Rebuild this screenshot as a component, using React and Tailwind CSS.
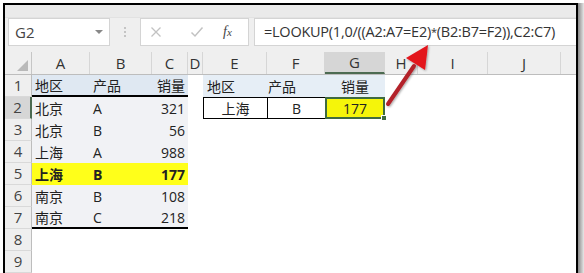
import React from "react";

const W = [27, 58, 62, 36, 15, 64, 58, 60, 33, 70, 73];
const LETTERS = ["A", "B", "C", "D", "E", "F", "G", "H", "I", "J"];

const cjk = "font-['Microsoft_YaHei','Noto_Sans_CJK_SC',sans-serif] text-[14px]";
const lat = "font-['Open_Sans','Noto_Sans_CJK_SC',sans-serif] text-[14px]";

function HeaderRow() {
  return (
    <div className="flex h-[23px] bg-[#efefef] border-b border-[#bdbdbd]">
      <div className="relative h-full border-r border-[#c6c6c6]" style={{ width: W[0] }}>
        <div className="absolute right-[3px] bottom-[3px] w-0 h-0 border-l-[11px] border-l-transparent border-b-[11px] border-b-[#b9b9b9]" />
      </div>
      {LETTERS.map((l, i) => (
        <div
          key={l}
          className={
            "h-full flex items-center justify-center border-r border-[#d6d6d6] text-[15px] text-[#333] font-['Open_Sans',sans-serif] " +
            (l === "G" ? "bg-[#d6d6d6] border-b-2 border-b-[#4c6b52]" : "")
          }
          style={{ width: W[i + 1] }}
        >
          {l}
        </div>
      ))}
      <div className="flex-1 h-full" />
    </div>
  );
}

function Cell({ i, children, className = "" }) {
  return (
    <div className={"h-full flex items-center shrink-0 " + className} style={{ width: W[i] }}>
      {children}
    </div>
  );
}

function RowNum({ n, active }) {
  return (
    <div
      className={
        "h-full flex items-center justify-center shrink-0 border-b border-[#d9d9d9] text-[15px] text-[#444] font-['Open_Sans',sans-serif] " +
        (active ? "bg-[#d6d6d6] border-r-2 border-r-[#4c6b52]" : "bg-[#efefef] border-r border-r-[#bdbdbd]")
      }
      style={{ width: W[0] }}
    >
      {n}
    </div>
  );
}

const data = [
  ["北京", "A", "321"],
  ["北京", "B", "56"],
  ["上海", "A", "988"],
  ["上海", "B", "177"],
  ["南京", "B", "108"],
  ["南京", "C", "218"],
];

function TableCells({ row, idx }) {
  const hl = idx === 3;
  const last = idx === 5;
  const base = hl ? "bg-[#ffff1a]" : "bg-[#f1f2f5]";
  const bb = last ? "border-b-2 border-b-black" : "";
  const bold = hl ? "font-bold" : "";
  return (
    <>
      <Cell i={1} className={`${base} ${bb} pl-[3px] ${cjk} ${bold} text-[#222]`}>{row[0]}</Cell>
      <Cell i={2} className={`${base} ${bb} pl-[3px] ${lat} ${bold} text-[#222]`}>{row[1]}</Cell>
      <Cell i={3} className={`${base} ${bb} justify-end pr-[3px] ${lat} ${bold} text-[#222]`}>{row[2]}</Cell>
    </>
  );
}

export default function App() {
  return (
    <div className="relative w-[584px] h-[273px] bg-white overflow-hidden">
      <div className="flex h-full pl-[3px] pt-[3px]">
        <div className="w-[575px] h-[270px] border-l-2 border-t-2 border-r-2 border-black bg-[#f0f0f0] flex flex-col overflow-hidden shrink-0">
          {/* top strip */}
          <div className="h-[13px] bg-[#eaeaea] border-b border-[#e2e2e2]" />
          {/* formula bar */}
          <div className="h-[29px] flex bg-[#efefef]">
            <div className="ml-[3px] w-[102px] h-full bg-white border border-[#d4d4d4] flex items-center justify-between pl-[6px] pr-[6px]">
              <span className="text-[15px] text-[#444] font-['Open_Sans',sans-serif]">G2</span>
              <span className="w-0 h-0 border-l-[4px] border-l-transparent border-r-[4px] border-r-transparent border-t-[4px] border-t-[#888]" />
            </div>
            <div className="w-[30px] h-full flex flex-col items-center justify-center gap-[2px]">
              <span className="w-[2px] h-[2px] bg-[#c4c4c4]" />
              <span className="w-[2px] h-[2px] bg-[#c4c4c4]" />
              <span className="w-[2px] h-[2px] bg-[#c4c4c4]" />
            </div>
            <div className="w-[109px] h-full bg-white border border-[#d4d4d4] flex items-center">
              <svg width="12" height="12" viewBox="0 0 12 12" className="ml-[9px]">
                <path d="M1.5 1.5 L10.5 10.5 M10.5 1.5 L1.5 10.5" stroke="#c2c2c2" strokeWidth="1.3" fill="none" />
              </svg>
              <svg width="14" height="12" viewBox="0 0 14 12" className="ml-[28px]">
                <path d="M1.5 6.5 L5 10 L12.5 1.5" stroke="#c2c2c2" strokeWidth="1.5" fill="none" />
              </svg>
              <span className="ml-[19px] text-[14px] italic text-[#444] font-['Liberation_Serif',serif]">
                f<span className="text-[11px]">x</span>
              </span>
            </div>
            <div className="w-[5px]" />
            <div className="flex-1 h-full bg-white border-y border-l border-[#d4d4d4] flex items-center pl-[9px] overflow-hidden">
              <span className="whitespace-nowrap text-[14.5px] text-[#333] font-['Open_Sans',sans-serif] tracking-[-0.25px]">
                =LOOKUP(1,0/((A2:A7=E2)<span className="text-[11px] align-[1px]">*</span>(B2:B7=F2)),C2:C7)
              </span>
            </div>
          </div>
          <div className="h-[6px] bg-[#efefef]" />
          <HeaderRow />
          <div className="flex-1 bg-white flex flex-col">
            {/* row 1 */}
            <div className="flex h-[22px]">
              <RowNum n={1} />
              <Cell i={1} className={`bg-[#dfe8f2] border-b-2 border-b-black pl-[3px] ${cjk} text-[#222]`}>地区</Cell>
              <Cell i={2} className={`bg-[#dfe8f2] border-b-2 border-b-black pl-[3px] ${cjk} text-[#222]`}>产品</Cell>
              <Cell i={3} className={`bg-[#dfe8f2] border-b-2 border-b-black justify-end pr-[3px] ${cjk} text-[#222]`}>销量</Cell>
              <Cell i={4} />
              <Cell i={5} className={`bg-[#e6eef6] pl-[4px] ${cjk} text-[#222]`}>地区</Cell>
              <Cell i={6} className={`bg-[#e6eef6] pl-[1px] ${cjk} text-[#222]`}>产品</Cell>
              <Cell i={7} className={`bg-[#e6eef6] justify-center ${cjk} text-[#222]`}>销量</Cell>
            </div>
            {/* row 2 */}
            <div className="flex h-[22px]">
              <RowNum n={2} active />
              <TableCells row={data[0]} idx={0} />
              <Cell i={4} />
              <Cell i={5} className={`border-y border-l border-black justify-center ${cjk} text-[#222]`}>上海</Cell>
              <Cell i={6} className={`border-y border-l border-black justify-center ${lat} text-[#222]`}>B</Cell>
              <Cell i={7} className={`relative border-2 border-[#3f6b40] bg-[#f5f50a] justify-center ${lat} text-[#222]`}>
                177
                <span className="absolute right-[-4px] bottom-[-4px] w-[6px] h-[6px] bg-[#3f6b40] border border-white" />
              </Cell>
            </div>
            {data.slice(1).map((r, k) => (
              <div key={k} className="flex h-[22px]">
                <RowNum n={k + 3} />
                <TableCells row={r} idx={k + 1} />
              </div>
            ))}
            <div className="flex h-[22px]">
              <RowNum n={8} />
            </div>
            <div className="flex h-[22px]">
              <RowNum n={9} />
            </div>
          </div>
        </div>
        <div className="w-[6px] h-full bg-gradient-to-r from-[#8a8a8a] to-[#e8e8e8]" />
      </div>
      {/* red arrow */}
      <svg className="absolute left-0 top-0 pointer-events-none" width="584" height="273" viewBox="0 0 584 273">
        <defs>
          <filter id="sh" x="-50%" y="-50%" width="200%" height="200%">
            <feDropShadow dx="1" dy="1" stdDeviation="1.2" floodColor="#000" floodOpacity="0.35" />
          </filter>
        </defs>
        <g filter="url(#sh)">
          <line x1="388" y1="104" x2="414" y2="66" stroke="#b3242a" strokeWidth="4" strokeLinecap="round" />
          <polygon points="428,45 425,70 406,58" fill="#e3141d" />
        </g>
      </svg>
    </div>
  );
}
